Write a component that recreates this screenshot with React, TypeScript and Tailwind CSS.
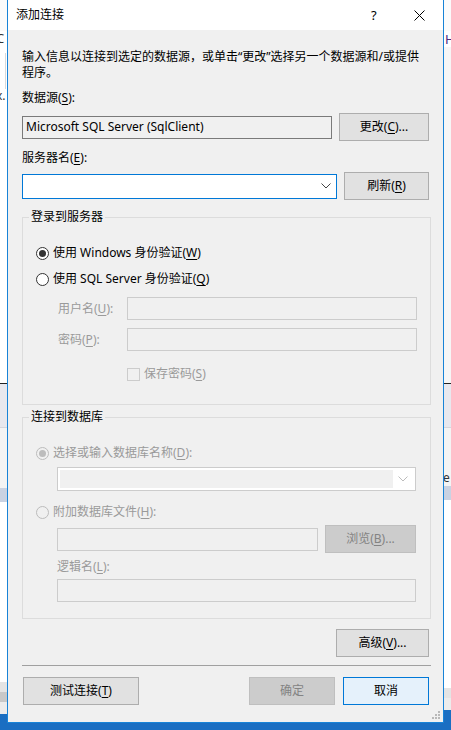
import React from 'react';

function U({ children }: { children: React.ReactNode }) {
  return <span className="underline underline-offset-[2px]">{children}</span>;
}

function Btn({
  children,
  w,
  kind = 'normal',
}: {
  children: React.ReactNode;
  w: string;
  kind?: 'normal' | 'primary' | 'disabled';
}) {
  const look =
    kind === 'primary'
      ? 'bg-[#e5f1fb] border-[#0078d7] text-black'
      : kind === 'disabled'
      ? 'bg-[#cccccc] border-[#bfbfbf] text-[#838383]'
      : 'bg-[#e1e1e1] border-[#adadad] text-black';
  return (
    <div className={`${w} h-[28px] shrink-0 border flex items-center justify-center ${look}`}>
      {children}
    </div>
  );
}

function Radio({ checked, disabled }: { checked?: boolean; disabled?: boolean }) {
  return (
    <span
      className={`w-[13px] h-[13px] rounded-full border flex items-center justify-center shrink-0 ${
        disabled ? 'border-[#bcbcbc] bg-[#f0f0f0]' : 'border-[#333333] bg-white'
      }`}
    >
      {checked && (
        <span
          className={`w-[7px] h-[7px] rounded-full ${disabled ? 'bg-[#bcbcbc]' : 'bg-[#333333]'}`}
        />
      )}
    </span>
  );
}

function Chevron({ color }: { color: string }) {
  return (
    <svg width="10" height="6" viewBox="0 0 10 6" className="shrink-0">
      <polyline points="0.5,0.5 5,5 9.5,0.5" fill="none" stroke={color} strokeWidth="1" />
    </svg>
  );
}

function DisabledBox({ w }: { w: string }) {
  return <div className={`${w} h-[23px] border border-[#cccccc] bg-[#f0f0f0] shrink-0`} />;
}

function LeftStrip() {
  return (
    <div className="w-[7px] h-[723px] flex flex-col shrink-0 overflow-hidden bg-white text-[#333]">
      <div className="h-[31px] bg-[#fbfbfb]" />
      <div className="h-[14px] -ml-[4px] leading-[14px] text-[13px]">C</div>
      <div className="h-[8px]" />
      <div className="h-[36px] border-r border-[#d9d9d9] mr-[1px]" />
      <div className="h-[14px] -ml-[4px] leading-[14px] text-[12px]">x.</div>
      <div className="h-[280px]" />
      <div className="h-[1px] bg-[#222]" />
      <div className="h-[43px] bg-[#e8e8ee]" />
      <div className="h-[1px] bg-[#d6d6dc]" />
      <div className="h-[60px] bg-[#f4f4f4]" />
      <div className="h-[14px] bg-[#c9d2e2]" />
      <div className="h-[180px] bg-white" />
      <div className="h-[10px] bg-[#e4e4e4]" />
      <div className="h-[10px] bg-[#c8c8c8]" />
      <div className="h-[12px] bg-[#ececec]" />
      <div className="flex-1 bg-[#1a6ec2]" />
    </div>
  );
}

function RightStrip() {
  return (
    <div className="w-[7px] h-[723px] flex flex-col shrink-0 overflow-hidden bg-white text-[#4b2a82]">
      <div className="h-[31px] bg-[#fbfbfb]" />
      <div className="h-[16px] pl-[1px] leading-[16px] text-[13px]">H</div>
      <div className="h-[336px] bg-[#f6f6f6]" />
      <div className="h-[1px] bg-[#222]" />
      <div className="h-[43px] bg-[#e8e8ee]" />
      <div className="h-[1px] bg-[#d6d6dc]" />
      <div className="h-[42px] bg-[#f4f4f4]" />
      <div className="h-[16px] bg-[#f4f4f4] leading-[16px] text-[12px] text-[#333] -ml-[1px]">e</div>
      <div className="h-[14px] bg-[#c9d2e2]" />
      <div className="h-[188px] bg-white" />
      <div className="h-[10px] bg-[#e4e4e4]" />
      <div className="h-[12px] bg-[#ececec]" />
      <div className="flex-1 bg-[#1a6ec2]" />
    </div>
  );
}

function Dialog() {
  return (
    <div className="w-[437px] h-[723px] shrink-0 border-x border-b border-[#1883d7] bg-[#f0f0f0] flex flex-col">
      <div className="h-[30px] bg-white flex items-center pl-[8px] shrink-0">
        <span>添加连接</span>
        <span className="ml-auto text-[13px] w-[7px]">?</span>
        <svg width="11" height="11" viewBox="0 0 11 11" className="ml-[36px] mr-[18px]">
          <line x1="0.5" y1="0.5" x2="10.5" y2="10.5" stroke="#000" strokeWidth="1" />
          <line x1="10.5" y1="0.5" x2="0.5" y2="10.5" stroke="#000" strokeWidth="1" />
        </svg>
      </div>

      <div className="flex flex-col pl-[14px] pr-[12px] flex-1">
        <p className="mt-[19px]">
          输入信息以连接到选定的数据源，或单击“更改”选择另一个数据源和/或提供程序。
        </p>

        <div className="mt-[9px]">
          数据源(<U>S</U>):
        </div>
        <div className="mt-[7px] flex items-center">
          <div className="w-[310px] h-[23px] border border-[#7a7a7a] bg-[#f0f0f0] flex items-center pl-[3px]">
            Microsoft SQL Server (SqlClient)
          </div>
          <div className="ml-[7px]">
            <Btn w="w-[90px]">
              更改(<U>C</U>)...
            </Btn>
          </div>
        </div>

        <div className="mt-[9px]">
          服务器名(<U>E</U>):
        </div>
        <div className="mt-[6px] flex items-center">
          <div className="w-[315px] h-[25px] border border-[#0078d7] bg-white flex items-center justify-end pr-[5px]">
            <Chevron color="#444" />
          </div>
          <div className="ml-[7px]">
            <Btn w="w-[85px]">
              刷新(<U>R</U>)
            </Btn>
          </div>
        </div>

        <fieldset className="mt-[9px] border border-[#dcdcdc] pb-[22px] flex flex-col">
          <legend className="ml-[6px] px-[2px]">登录到服务器</legend>
          <div className="mt-[20px] ml-[13px] flex items-center gap-[4px]">
            <Radio checked />
            <span>
              使用 Windows 身份验证(<U>W</U>)
            </span>
          </div>
          <div className="mt-[10px] ml-[13px] flex items-center gap-[4px]">
            <Radio />
            <span>
              使用 SQL Server 身份验证(<U>Q</U>)
            </span>
          </div>
          <div className="mt-[10px] ml-[35px] flex items-center text-[#9a9a9a]">
            <span className="w-[69px]">
              用户名(<U>U</U>):
            </span>
            <DisabledBox w="w-[290px]" />
          </div>
          <div className="mt-[8px] ml-[35px] flex items-center text-[#9a9a9a]">
            <span className="w-[69px]">
              密码(<U>P</U>):
            </span>
            <DisabledBox w="w-[290px]" />
          </div>
          <div className="mt-[15px] ml-[104px] flex items-center gap-[4px] text-[#9a9a9a]">
            <span className="w-[13px] h-[13px] border border-[#cccccc] bg-[#f0f0f0]" />
            <span>
              保存密码(<U>S</U>)
            </span>
          </div>
        </fieldset>

        <fieldset className="mt-[4px] border border-[#dcdcdc] pb-[16px] flex flex-col">
          <legend className="ml-[6px] px-[2px]">连接到数据库</legend>
          <div className="mt-[20px] ml-[13px] flex items-center gap-[4px] text-[#9a9a9a]">
            <Radio checked disabled />
            <span>
              选择或输入数据库名称(<U>D</U>):
            </span>
          </div>
          <div className="mt-[6px] ml-[34px] w-[359px] h-[24px] border border-[#cccccc] bg-white flex items-center p-[2px]">
            <div className="flex-1 h-full bg-[#f0f0f0]" />
            <div className="w-[20px] flex items-center justify-center">
              <Chevron color="#bcbcbc" />
            </div>
          </div>
          <div className="mt-[13px] ml-[13px] flex items-center gap-[4px] text-[#9a9a9a]">
            <Radio disabled />
            <span>
              附加数据库文件(<U>H</U>):
            </span>
          </div>
          <div className="mt-[5px] ml-[34px] flex items-center">
            <DisabledBox w="w-[261px]" />
            <div className="ml-[7px]">
              <Btn w="w-[91px]" kind="disabled">
                浏览(<U>B</U>)...
              </Btn>
            </div>
          </div>
          <div className="mt-[6px] ml-[34px] text-[#9a9a9a]">
            逻辑名(<U>L</U>):
          </div>
          <div className="mt-[4px] ml-[34px]">
            <DisabledBox w="w-[359px]" />
          </div>
        </fieldset>

        <div className="mt-[10px] flex justify-end pr-[2px]">
          <Btn w="w-[93px]">
            高级(<U>V</U>)...
          </Btn>
        </div>

        <div className="mt-[8px] h-[1px] bg-[#a0a0a0]" />

        <div className="mt-[11px] flex items-center pr-[2px]">
          <div className="ml-[1px]">
            <Btn w="w-[116px]">
              测试连接(<U>T</U>)
            </Btn>
          </div>
          <div className="ml-auto">
            <Btn w="w-[86px]" kind="disabled">
              确定
            </Btn>
          </div>
          <div className="ml-[8px]">
            <Btn w="w-[86px]" kind="primary">
              取消
            </Btn>
          </div>
        </div>

        <div className="flex-1 flex items-end justify-end -mr-[10px] pb-[2px]">
          <svg width="9" height="9" viewBox="0 0 9 9">
            <rect x="6" y="0" width="2" height="2" fill="#b8b8b8" />
            <rect x="3" y="3" width="2" height="2" fill="#b8b8b8" />
            <rect x="6" y="3" width="2" height="2" fill="#b8b8b8" />
            <rect x="0" y="6" width="2" height="2" fill="#b8b8b8" />
            <rect x="3" y="6" width="2" height="2" fill="#b8b8b8" />
            <rect x="6" y="6" width="2" height="2" fill="#b8b8b8" />
          </svg>
        </div>
      </div>
    </div>
  );
}

export default function App() {
  return (
    <div className="w-[451px] h-[730px] overflow-hidden flex flex-col bg-white text-black text-[12px] leading-[16px] font-['Segoe_UI','Noto_Sans','Noto_Sans_CJK_SC',sans-serif]">
      <div className="flex h-[723px] shrink-0">
        <LeftStrip />
        <Dialog />
        <RightStrip />
      </div>
      <div className="flex-1 bg-[#1a6ec2]" />
    </div>
  );
}
